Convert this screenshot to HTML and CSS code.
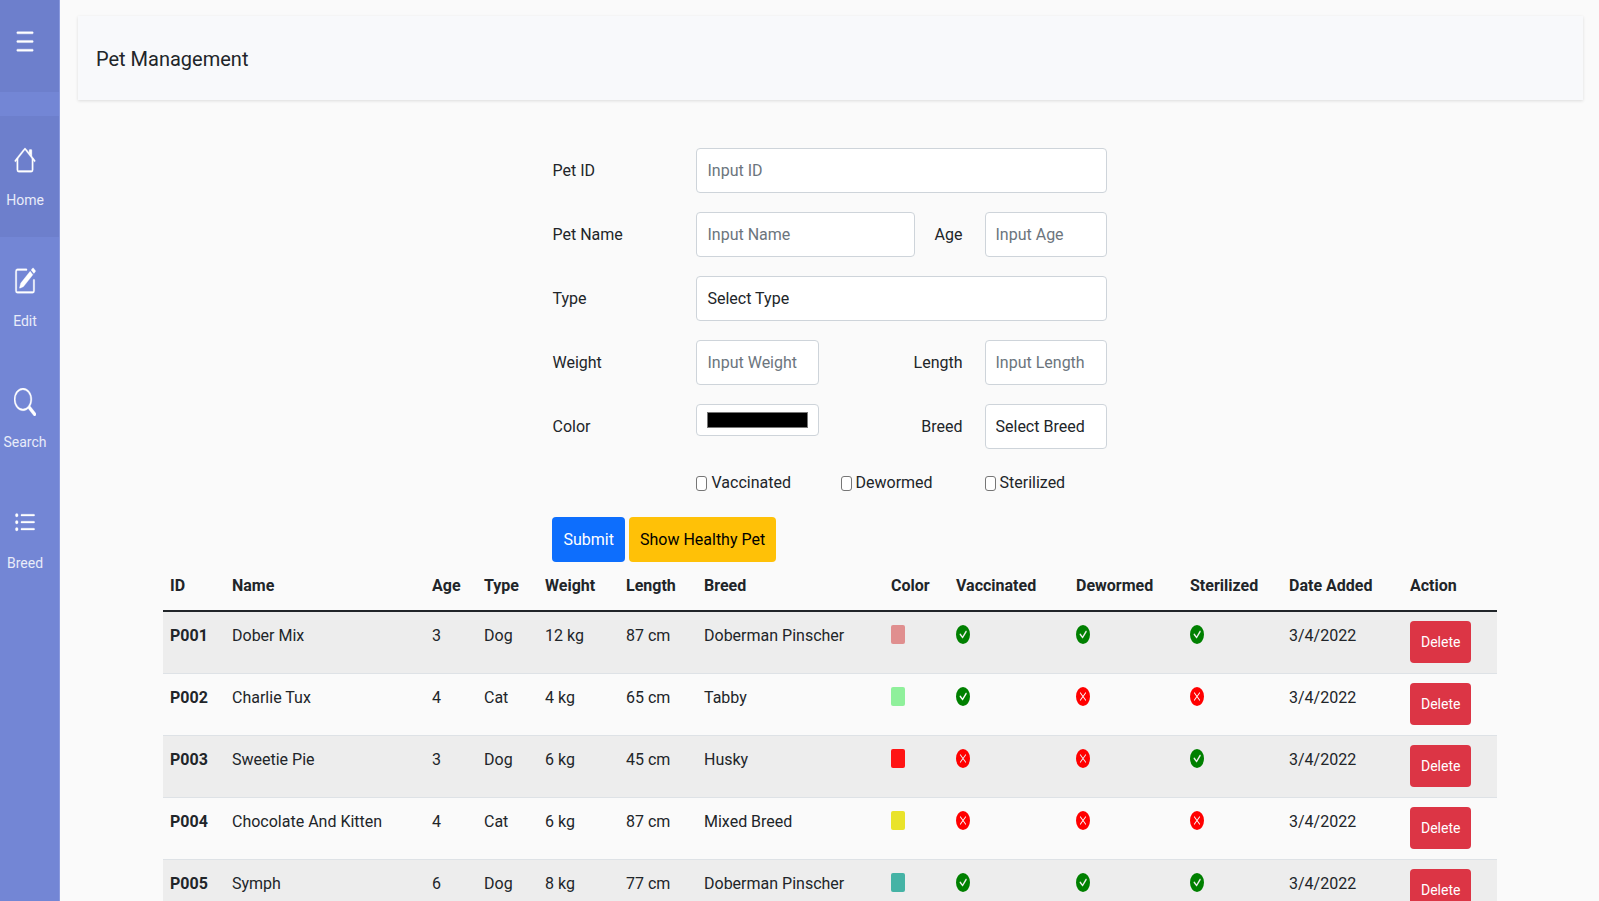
FILE: index.html
```
<!DOCTYPE html>
<html lang="en">
<head>
<meta charset="utf-8">
<title>Pet Management</title>
<link rel="stylesheet" href="styles.css">
</head>
<body>
<svg class="sprite" aria-hidden="true">
  <symbol id="ok" viewBox="0 0 16 16" preserveAspectRatio="none"><path d="M16 8A8 8 0 1 1 0 8a8 8 0 0 1 16 0zm-3.97-3.03a.75.75 0 0 0-1.08.022L7.477 9.417 5.384 7.323a.75.75 0 0 0-1.06 1.06L6.97 11.03a.75.75 0 0 0 1.079-.02l3.992-4.99a.75.75 0 0 0-.01-1.05z"/></symbol>
  <symbol id="no" viewBox="0 0 16 16" preserveAspectRatio="none"><path d="M16 8A8 8 0 1 1 0 8a8 8 0 0 1 16 0zM5.354 4.646a.5.5 0 1 0-.708.708L7.293 8l-2.647 2.646a.5.5 0 0 0 .708.708L8 8.707l2.646 2.647a.5.5 0 0 0 .708-.708L8.707 8l2.647-2.646a.5.5 0 0 0-.708-.708L8 7.293 5.354 4.646z"/></symbol>
</svg>
<div class="wrapper">
  <nav class="sidebar">
    <button class="menu-toggle" type="button" aria-label="Toggle menu">
      <svg class="menu-icon" viewBox="0 0 16 16" preserveAspectRatio="none"><path fill-rule="evenodd" d="M2.5 12a.5.5 0 0 1 .5-.5h10a.5.5 0 0 1 0 1H3a.5.5 0 0 1-.5-.5zm0-4a.5.5 0 0 1 .5-.5h10a.5.5 0 0 1 0 1H3a.5.5 0 0 1-.5-.5zm0-4a.5.5 0 0 1 .5-.5h10a.5.5 0 0 1 0 1H3a.5.5 0 0 1-.5-.5z"/></svg>
    </button>
    <ul class="nav-list">
      <li><a class="nav-link active" href="#">
        <svg class="nav-icon" viewBox="0 0 16 16" preserveAspectRatio="none"><path fill-rule="evenodd" d="M2 13.5V7h1v6.5a.5.5 0 0 0 .5.5h9a.5.5 0 0 0 .5-.5V7h1v6.5a1.5 1.5 0 0 1-1.5 1.5h-9A1.5 1.5 0 0 1 2 13.5zm11-11V6l-2-2V2.500a.5.5 0 0 1 .5-.5h1a.5.5 0 0 1 .5.5z"/><path fill-rule="evenodd" d="M7.293 1.5a1 1 0 0 1 1.414 0l6.647 6.646a.5.5 0 0 1-.708.708L8 2.207 1.354 8.854a.5.5 0 1 1-.708-.708L7.293 1.5z"/></svg>
        <span>Home</span></a></li>
      <li><a class="nav-link" href="#">
        <svg class="nav-icon" viewBox="0 0 16 16" preserveAspectRatio="none"><path d="M15.502 1.940a.5.5 0 0 1 0 .706L14.459 3.690l-2-2L13.502.646a.5.5 0 0 1 .707 0l1.293 1.293zm-1.750 2.456-2-2L4.939 9.210a.5.5 0 0 0-.121.196l-.805 2.414a.25.25 0 0 0 .316.316l2.414-.805a.5.5 0 0 0 .196-.120l6.813-6.814z"/><path fill-rule="evenodd" d="M1 13.500A1.500 1.500 0 0 0 2.500 15h11a1.500 1.500 0 0 0 1.500-1.500v-6a.5.5 0 0 0-1 0v6a.5.5 0 0 1-.5.5h-11a.5.5 0 0 1-.5-.5v-11a.5.5 0 0 1 .5-.5H9a.5.5 0 0 0 0-1H2.500A1.500 1.500 0 0 0 1 2.500v11z"/></svg>
        <span>Edit</span></a></li>
      <li><a class="nav-link" href="#">
        <svg class="nav-icon" viewBox="0 0 16 16" preserveAspectRatio="none"><path d="M11.742 10.344a6.500 6.500 0 1 0-1.397 1.398h-.001c.030.040.062.078.098.115l3.850 3.850a1 1 0 0 0 1.415-1.414l-3.850-3.850a1.007 1.007 0 0 0-.115-.100zM12 6.500a5.500 5.500 0 1 1-11 0 5.500 5.500 0 0 1 11 0z"/></svg>
        <span>Search</span></a></li>
      <li><a class="nav-link" href="#">
        <svg class="nav-icon" viewBox="0 0 16 16" preserveAspectRatio="none"><path fill-rule="evenodd" d="M5 11.500a.5.5 0 0 1 .5-.5h9a.5.5 0 0 1 0 1h-9a.5.5 0 0 1-.5-.5zm0-4a.5.5 0 0 1 .5-.5h9a.5.5 0 0 1 0 1h-9a.5.5 0 0 1-.5-.5zm0-4a.5.5 0 0 1 .5-.5h9a.5.5 0 0 1 0 1h-9a.5.5 0 0 1-.5-.5zm-3 1a1 1 0 1 0 0-2 1 1 0 0 0 0 2zm0 4a1 1 0 1 0 0-2 1 1 0 0 0 0 2zm0 4a1 1 0 1 0 0-2 1 1 0 0 0 0 2z"/></svg>
        <span>Breed</span></a></li>
    </ul>
  </nav>
  <main class="content">
    <header class="page-header"><h1>Pet Management</h1></header>
    <form class="pet-form">
      <label for="pet-id">Pet ID</label>
      <input class="field span-9" id="pet-id" type="text" placeholder="Input ID">

      <label for="pet-name">Pet Name</label>
      <input class="field span-5" id="pet-name" type="text" placeholder="Input Name">
      <label class="short" for="age">Age</label>
      <input class="field span-3" id="age" type="text" placeholder="Input Age">

      <label for="type">Type</label>
      <select class="field span-9" id="type"><option>Select Type</option></select>

      <label for="weight">Weight</label>
      <input class="field span-3" id="weight" type="text" placeholder="Input Weight">
      <label class="side" for="length">Length</label>
      <input class="field span-3" id="length" type="text" placeholder="Input Length">

      <label for="color">Color</label>
      <input class="field color-field span-3" id="color" type="color" value="#000000">
      <label class="side" for="breed">Breed</label>
      <select class="field span-3" id="breed"><option>Select Breed</option></select>

      <label class="check first"><input type="checkbox">Vaccinated</label>
      <label class="check"><input type="checkbox">Dewormed</label>
      <label class="check"><input type="checkbox">Sterilized</label>

      <div class="actions">
        <button class="btn primary" type="button">Submit</button>
        <button class="btn warning" type="button">Show Healthy Pet</button>
      </div>
    </form>
    <div class="table-wrap">
      <table class="pets">
        <colgroup>
          <col class="w-id"><col class="w-name"><col class="w-age"><col class="w-type"><col class="w-weight"><col class="w-length"><col class="w-breed"><col class="w-color"><col class="w-vac"><col class="w-dew"><col class="w-ster"><col class="w-date"><col class="w-action">
        </colgroup>
        <thead>
          <tr><th>ID</th><th>Name</th><th>Age</th><th>Type</th><th>Weight</th><th>Length</th><th>Breed</th><th>Color</th><th>Vaccinated</th><th>Dewormed</th><th>Sterilized</th><th>Date Added</th><th>Action</th></tr>
        </thead>
        <tbody>
          <tr><th scope="row">P001</th><td>Dober Mix</td><td>3</td><td>Dog</td><td>12 kg</td><td>87 cm</td><td>Doberman Pinscher</td><td><span class="swatch rose"></span></td><td><svg class="mark yes"><use href="#ok"/></svg></td><td><svg class="mark yes"><use href="#ok"/></svg></td><td><svg class="mark yes"><use href="#ok"/></svg></td><td>3/4/2022</td><td><button class="btn danger" type="button">Delete</button></td></tr>
          <tr><th scope="row">P002</th><td>Charlie Tux</td><td>4</td><td>Cat</td><td>4 kg</td><td>65 cm</td><td>Tabby</td><td><span class="swatch mint"></span></td><td><svg class="mark yes"><use href="#ok"/></svg></td><td><svg class="mark not"><use href="#no"/></svg></td><td><svg class="mark not"><use href="#no"/></svg></td><td>3/4/2022</td><td><button class="btn danger" type="button">Delete</button></td></tr>
          <tr><th scope="row">P003</th><td>Sweetie Pie</td><td>3</td><td>Dog</td><td>6 kg</td><td>45 cm</td><td>Husky</td><td><span class="swatch red"></span></td><td><svg class="mark not"><use href="#no"/></svg></td><td><svg class="mark not"><use href="#no"/></svg></td><td><svg class="mark yes"><use href="#ok"/></svg></td><td>3/4/2022</td><td><button class="btn danger" type="button">Delete</button></td></tr>
          <tr><th scope="row">P004</th><td>Chocolate And Kitten</td><td>4</td><td>Cat</td><td>6 kg</td><td>87 cm</td><td>Mixed Breed</td><td><span class="swatch yellow"></span></td><td><svg class="mark not"><use href="#no"/></svg></td><td><svg class="mark not"><use href="#no"/></svg></td><td><svg class="mark not"><use href="#no"/></svg></td><td>3/4/2022</td><td><button class="btn danger" type="button">Delete</button></td></tr>
          <tr><th scope="row">P005</th><td>Symph</td><td>6</td><td>Dog</td><td>8 kg</td><td>77 cm</td><td>Doberman Pinscher</td><td><span class="swatch teal"></span></td><td><svg class="mark yes"><use href="#ok"/></svg></td><td><svg class="mark yes"><use href="#ok"/></svg></td><td><svg class="mark yes"><use href="#ok"/></svg></td><td>3/4/2022</td><td><button class="btn danger" type="button">Delete</button></td></tr>
        </tbody>
      </table>
    </div>
  </main>
</div>
</body>
</html>
```
FILE: styles.css
```
* { box-sizing: border-box; }

body {
  margin: 0;
  background: #fafafa;
  color: #212529;
  font-family: Roboto, sans-serif;
  font-size: 16px;
  line-height: 30px;
}

input, select, button { font: inherit; color: inherit; }

.sprite { display: none; }

.wrapper {
  display: flex;
  height: 100vh;
  overflow: hidden;
}

/* Sidebar */
.sidebar {
  flex: none;
  width: 60px;
  background: #7386d5;
  border-right: 1px solid #8a9ade;
  color: #fff;
}

.menu-toggle {
  display: flex;
  width: 100%;
  height: 92px;
  padding: 24px 13px;
  border: 0;
  background: #6d7fcc;
  color: #fff;
}

.menu-icon { width: 24px; height: 35px; }

.menu-icon, .nav-icon {
  fill: #fff;
  stroke: #fff;
  stroke-width: 0.2;
}

.nav-list {
  margin: 24px 0 0;
  padding: 0;
  list-style: none;
}

.nav-link {
  display: flex;
  flex-direction: column;
  align-items: center;
  gap: 12px;
  padding: 30px 9px 22px 0;
  color: #e9ecf9;
  font-size: 14px;
  line-height: 29px;
  text-decoration: none;
}

.nav-link.active { background: #6d7fcc; }
.nav-icon { width: 22px; height: 28px; }

/* Content */
.content { flex: 1; min-width: 0; }

.page-header {
  margin: 16px 16px 48px 18px;
  padding: 25px 18px 23px;
  background: #f8f9fb;
  box-shadow: 0 1px 3px rgba(0, 0, 0, .12);
}

.page-header h1 {
  margin: 0;
  font-size: 20px;
  font-weight: 400;
  line-height: 36px;
}

.pet-form {
  display: grid;
  grid-template-columns: repeat(12, minmax(0, 1fr));
  gap: 19px 22px;
  width: 36%;
  margin: 0 auto;
  align-items: center;
}

.pet-form > label { grid-column: span 3; }
.pet-form > .short { grid-column: span 1; justify-self: end; }
.pet-form > .side { grid-column: 8 / span 2; justify-self: end; }

.field {
  width: 100%;
  min-width: 0;
  height: 45px;
  padding: 7px 10px;
  border: 1px solid #ced4da;
  border-radius: 4px;
  background: #fff;
  appearance: none;
}

.field::placeholder { color: #6c757d; opacity: 1; }

.color-field {
  align-self: start;
  height: 32px;
}

.color-field::-webkit-color-swatch-wrapper { padding: 0; }
.color-field::-webkit-color-swatch { border: 1px solid #777; border-radius: 0; }

.span-3 { grid-column-end: span 3; }
.span-5 { grid-column-end: span 5; }
.span-9 { grid-column-end: span 9; }

.check {
  display: flex;
  align-items: center;
  gap: 4px;
}

.pet-form > .check.first { grid-column: 4 / span 3; }

.check input {
  width: 11px;
  height: 15px;
  margin: 0;
  border: 1px solid #767676;
  border-radius: 3px;
  background: #fff;
  appearance: none;
}

.actions {
  grid-column: 1 / -1;
  display: flex;
  gap: 4px;
}

.btn {
  height: 45px;
  padding: 0 11px;
  border: 0;
  border-radius: 4px;
  white-space: nowrap;
}

.primary { background: #0d6efd; color: #fff; }
.warning { background: #ffc107; color: #000; }

.danger {
  display: block;
  height: 42px;
  background: #dc3545;
  color: #fff;
  font-size: 14px;
}

/* Table */
.table-wrap { padding: 0 103px; }

.pets {
  width: 100%;
  table-layout: fixed;
  border-collapse: collapse;
}

.pets th, .pets td {
  padding: 9px 7px;
  text-align: left;
  vertical-align: top;
  white-space: nowrap;
}

.pets thead th { border-bottom: 2px solid #212529; }
.pets tbody tr { height: 62px; border-bottom: 1px solid #dee2e6; }
.pets tbody tr:nth-child(odd) { background: #ededed; }

.w-id { width: 62px; }
.w-name { width: 200px; }
.w-age { width: 52px; }
.w-type { width: 61px; }
.w-weight { width: 81px; }
.w-length { width: 78px; }
.w-breed { width: 187px; }
.w-color { width: 65px; }
.w-vac { width: 120px; }
.w-dew { width: 114px; }
.w-ster { width: 99px; }
.w-date { width: 121px; }
.w-action { width: 94px; }

.swatch, .mark {
  display: block;
  width: 14px;
  height: 19px;
  margin-top: 4px;
}

.swatch { border-radius: 2px; }
.rose { background: #e08f8f; }
.mint { background: #8ff09b; }
.red { background: #ff1414; }
.yellow { background: #e9e32a; }
.teal { background: #45b3a5; }
.yes { fill: #008000; }
.not { fill: #ff0000; }
```
